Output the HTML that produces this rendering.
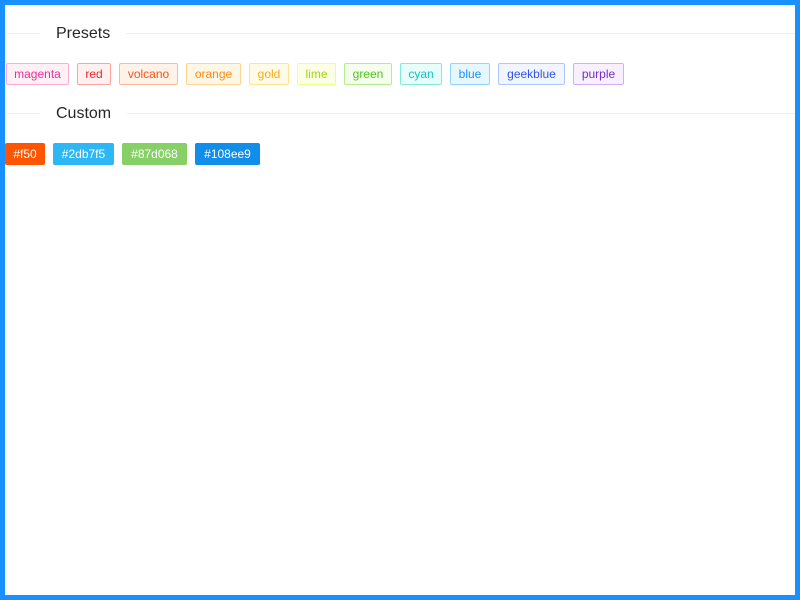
<!DOCTYPE html>
<html><head><style>
html,body{margin:0;padding:0}
body{width:790px;height:590px;border:5px solid #1890ff;background:#fff;position:relative;font-family:"Liberation Sans",sans-serif;overflow:hidden}
.div{position:absolute;left:0;right:0;height:1px;background:#f0f0f0}
.dt{position:absolute;left:35px;background:#fff;padding:0 16px;font-size:16px;color:#262626;line-height:24px}
.row{position:absolute;left:0;display:flex}
.t{box-sizing:border-box;height:22px;line-height:20px;font-size:12px;border:1px solid;border-radius:2px;margin-right:8px;text-align:center;white-space:nowrap}
</style></head><body>
<div class="div" style="top:28px"></div>
<div class="dt" style="top:17px">Presets</div>
<div class="row" style="top:58px;left:1px">
<span class="t" style="width:63px;color:#eb2f96;background:#fff0f6;border-color:#ffadd2">magenta</span>
<span class="t" style="width:34px;color:#f5222d;background:#fff1f0;border-color:#ffa39e">red</span>
<span class="t" style="width:59px;color:#fa541c;background:#fff2e8;border-color:#ffbb96">volcano</span>
<span class="t" style="width:55px;color:#fa8c16;background:#fff7e6;border-color:#ffd591">orange</span>
<span class="t" style="width:40px;color:#faad14;background:#fffbe6;border-color:#ffe58f">gold</span>
<span class="t" style="width:39px;color:#a0d911;background:#fcffe6;border-color:#eaff8f">lime</span>
<span class="t" style="width:48px;color:#52c41a;background:#f6ffed;border-color:#b7eb8f">green</span>
<span class="t" style="width:42px;color:#13c2c2;background:#e6fffb;border-color:#87e8de">cyan</span>
<span class="t" style="width:40px;color:#1890ff;background:#e6f7ff;border-color:#91d5ff">blue</span>
<span class="t" style="width:67px;color:#2f54eb;background:#f0f5ff;border-color:#adc6ff">geekblue</span>
<span class="t" style="width:51px;color:#722ed1;background:#f9f0ff;border-color:#d3adf7">purple</span>
</div>
<div class="div" style="top:108px"></div>
<div class="dt" style="top:97px">Custom</div>
<div class="row" style="top:138px">
<span class="t" style="width:40px;color:#fff;background:#f50;border-color:#f50">#f50</span>
<span class="t" style="width:61px;color:#fff;background:#2db7f5;border-color:#2db7f5">#2db7f5</span>
<span class="t" style="width:65px;color:#fff;background:#87d068;border-color:#87d068">#87d068</span>
<span class="t" style="width:65px;color:#fff;background:#108ee9;border-color:#108ee9">#108ee9</span>
</div>
</body></html>
